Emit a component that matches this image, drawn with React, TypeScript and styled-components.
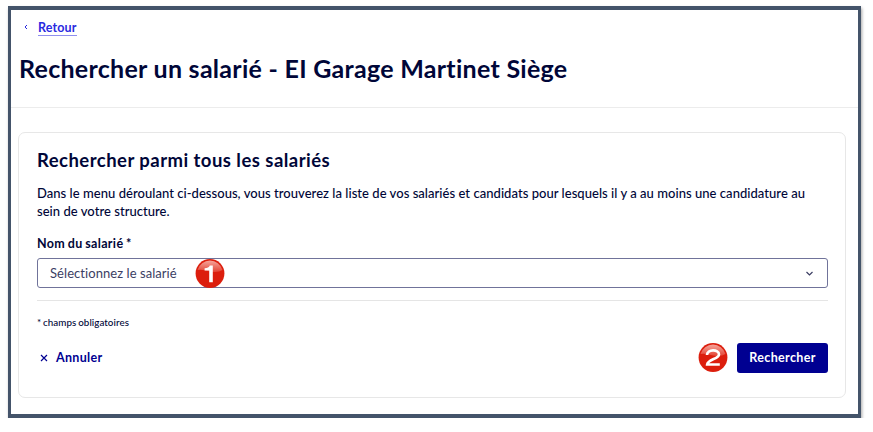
import React from "react";
import styled, { createGlobalStyle } from "styled-components";

const GlobalStyle = createGlobalStyle`
  * { box-sizing: border-box; }
  body {
    margin: 0;
    background: #fff;
    color: #000638;
    font-family: Lato, "Liberation Sans", sans-serif;
    font-kerning: normal;
    font-variant-ligatures: none;
  }
  h1, h2, p { margin: 0; }
`;

const Frame = styled.div`
  width: 853px;
  height: 412px;
  margin: 6px 0 0 8px;
  border: 3px solid #44546a;
  border-top-width: 4px;
  border-bottom-width: 4px;
  background: #fff;
  box-shadow: 1px 2px 3px rgba(0, 0, 0, 0.35);
`;

const Header = styled.header`
  height: 98px;
  padding: 7px 8px 0;
  border-bottom: 1px solid #ececec;
`;

const BackLink = styled.a`
  display: flex;
  align-items: center;
  gap: 10px;
  height: 20px;
  padding-left: 5px;
  color: #2a2ae0;
  font-size: 12.5px;
  font-weight: 700;
  line-height: 20px;
  letter-spacing: 0.15px;
`;

const BackLabel = styled.span`
  height: 17px;
  line-height: 18px;
  border-bottom: 1px solid #8f8fee;
`;

const Title = styled.h1`
  margin-top: 15px;
  font-size: 25px;
  font-weight: 700;
  line-height: 32px;
  letter-spacing: 0.28px;
`;

const Card = styled.section`
  height: 266px;
  margin: 24px 12px 0 7px;
  padding: 15px 17px 0 18px;
  border: 1px solid #e7e7e7;
  border-radius: 7px;
`;

const Subtitle = styled.h2`
  font-size: 18.5px;
  font-weight: 700;
  line-height: 24px;
  letter-spacing: 0.46px;
`;

const Intro = styled.p`
  margin-top: 12px;
  font-size: 13px;
  font-weight: 500;
  line-height: 18px;
  letter-spacing: 0.04px;
  white-space: nowrap;
`;

const Label = styled.div`
  margin-top: 15px;
  font-size: 12.5px;
  font-weight: 700;
  line-height: 18px;
  letter-spacing: 0.35px;
  word-spacing: -0.8px;
`;

const Select = styled.div`
  display: flex;
  align-items: center;
  height: 30px;
  margin-top: 5px;
  padding: 0 13px 0 12px;
  border: 1px solid #70739a;
  border-radius: 3px;
  color: #3b3e63;
  font-size: 13px;
  line-height: 28px;
  letter-spacing: 0.06px;
`;

const Badge = styled.svg`
  display: block;
  flex: none;
  width: 30px;
  height: 30px;
`;

const SelectBadge = styled.div`
  margin: 1px 0 0 18px;
`;

const Chevron = styled.svg`
  width: 9px;
  height: 9px;
  margin-left: auto;
`;

const Divider = styled.div`
  height: 1px;
  margin-top: 12px;
  background: #e5e5e5;
`;

const Note = styled.p`
  margin-top: 13px;
  font-size: 9.8px;
  font-weight: 500;
  line-height: 16px;
  letter-spacing: 0.06px;
  word-spacing: -0.7px;
`;

const Actions = styled.div`
  display: flex;
  align-items: center;
  height: 30px;
  margin-top: 13px;
`;

const CancelButton = styled.button`
  display: flex;
  align-items: center;
  gap: 8px;
  padding: 0 0 0 3px;
  border: 0;
  background: none;
  color: #000091;
  font: 700 12.5px/20px Lato, sans-serif;
  letter-spacing: 0.3px;
`;

const SubmitButton = styled.button`
  width: 91px;
  height: 30px;
  margin-left: 9px;
  padding: 0;
  border: 0;
  border-radius: 3px;
  background: #000091;
  color: #fff;
  font: 700 12.5px/28px Lato, sans-serif;
  letter-spacing: 0.35px;
`;

const Spacer = styled.div`
  flex: 1;
`;

function StepBadge({ step }: { step: 1 | 2 }) {
  return (
    <Badge viewBox="0 0 30 30" role="img" aria-label={`${step}`}>
      <defs>
        <linearGradient id={`gloss${step}`} x1="0" y1="0" x2="0" y2="1">
          <stop offset="0" stopColor="#f5a59b" />
          <stop offset="1" stopColor="#e34434" />
        </linearGradient>
      </defs>
      <circle cx="15" cy="14.5" r="14.4" fill="#dc1e0d" />
      <path d="M2.5 11A13 13 0 0 1 27.5 11Q23 14 15 12.5Q7 10 2.5 11Z" fill={`url(#gloss${step})`} />
      {step === 1 ? (
        <path d="M14.2 23.2V11.4H9.6V9.2Q13.8 9.1 14.8 6.5H17.8V23.2Z" fill="#fff" />
      ) : (
        <path
          d="M9 12.1C9 6 21 6 21 11.4C21 16 9.8 16 9.2 21.5H21.8"
          fill="none"
          stroke="#fff"
          strokeWidth="2.7"
        />
      )}
    </Badge>
  );
}

export default function App() {
  return (
    <>
      <GlobalStyle />
      <Frame>
        <Header>
          <BackLink>
            <svg width="4" height="6" viewBox="0 0 4 6" fill="none" stroke="currentColor">
              <path d="M3 1L1 3L3 5" />
            </svg>
            <BackLabel>Retour</BackLabel>
          </BackLink>
          <Title>Rechercher un salarié - EI Garage Martinet Siège</Title>
        </Header>
        <Card>
          <Subtitle>Rechercher parmi tous les salariés</Subtitle>
          <Intro>
            Dans le menu déroulant ci-dessous, vous trouverez la liste de vos salariés et candidats
            pour lesquels il y a au moins une candidature au
            <br />
            sein de votre structure.
          </Intro>
          <Label>Nom du salarié *</Label>
          <Select>
            <span>Sélectionnez le salarié</span>
            <SelectBadge>
              <StepBadge step={1} />
            </SelectBadge>
            <Chevron viewBox="0 0 9 9" fill="none" stroke="currentColor" strokeWidth="1.2">
              <path d="M1.5 3L4.5 6L7.5 3" />
            </Chevron>
          </Select>
          <Divider />
          <Note>* champs obligatoires</Note>
          <Actions>
            <CancelButton>
              <svg width="8" height="8" viewBox="0 0 8 8" fill="none" stroke="currentColor" strokeWidth="1.2">
                <path d="M1 1L7 7M7 1L1 7" />
              </svg>
              Annuler
            </CancelButton>
            <Spacer />
            <StepBadge step={2} />
            <SubmitButton>Rechercher</SubmitButton>
          </Actions>
        </Card>
      </Frame>
    </>
  );
}
